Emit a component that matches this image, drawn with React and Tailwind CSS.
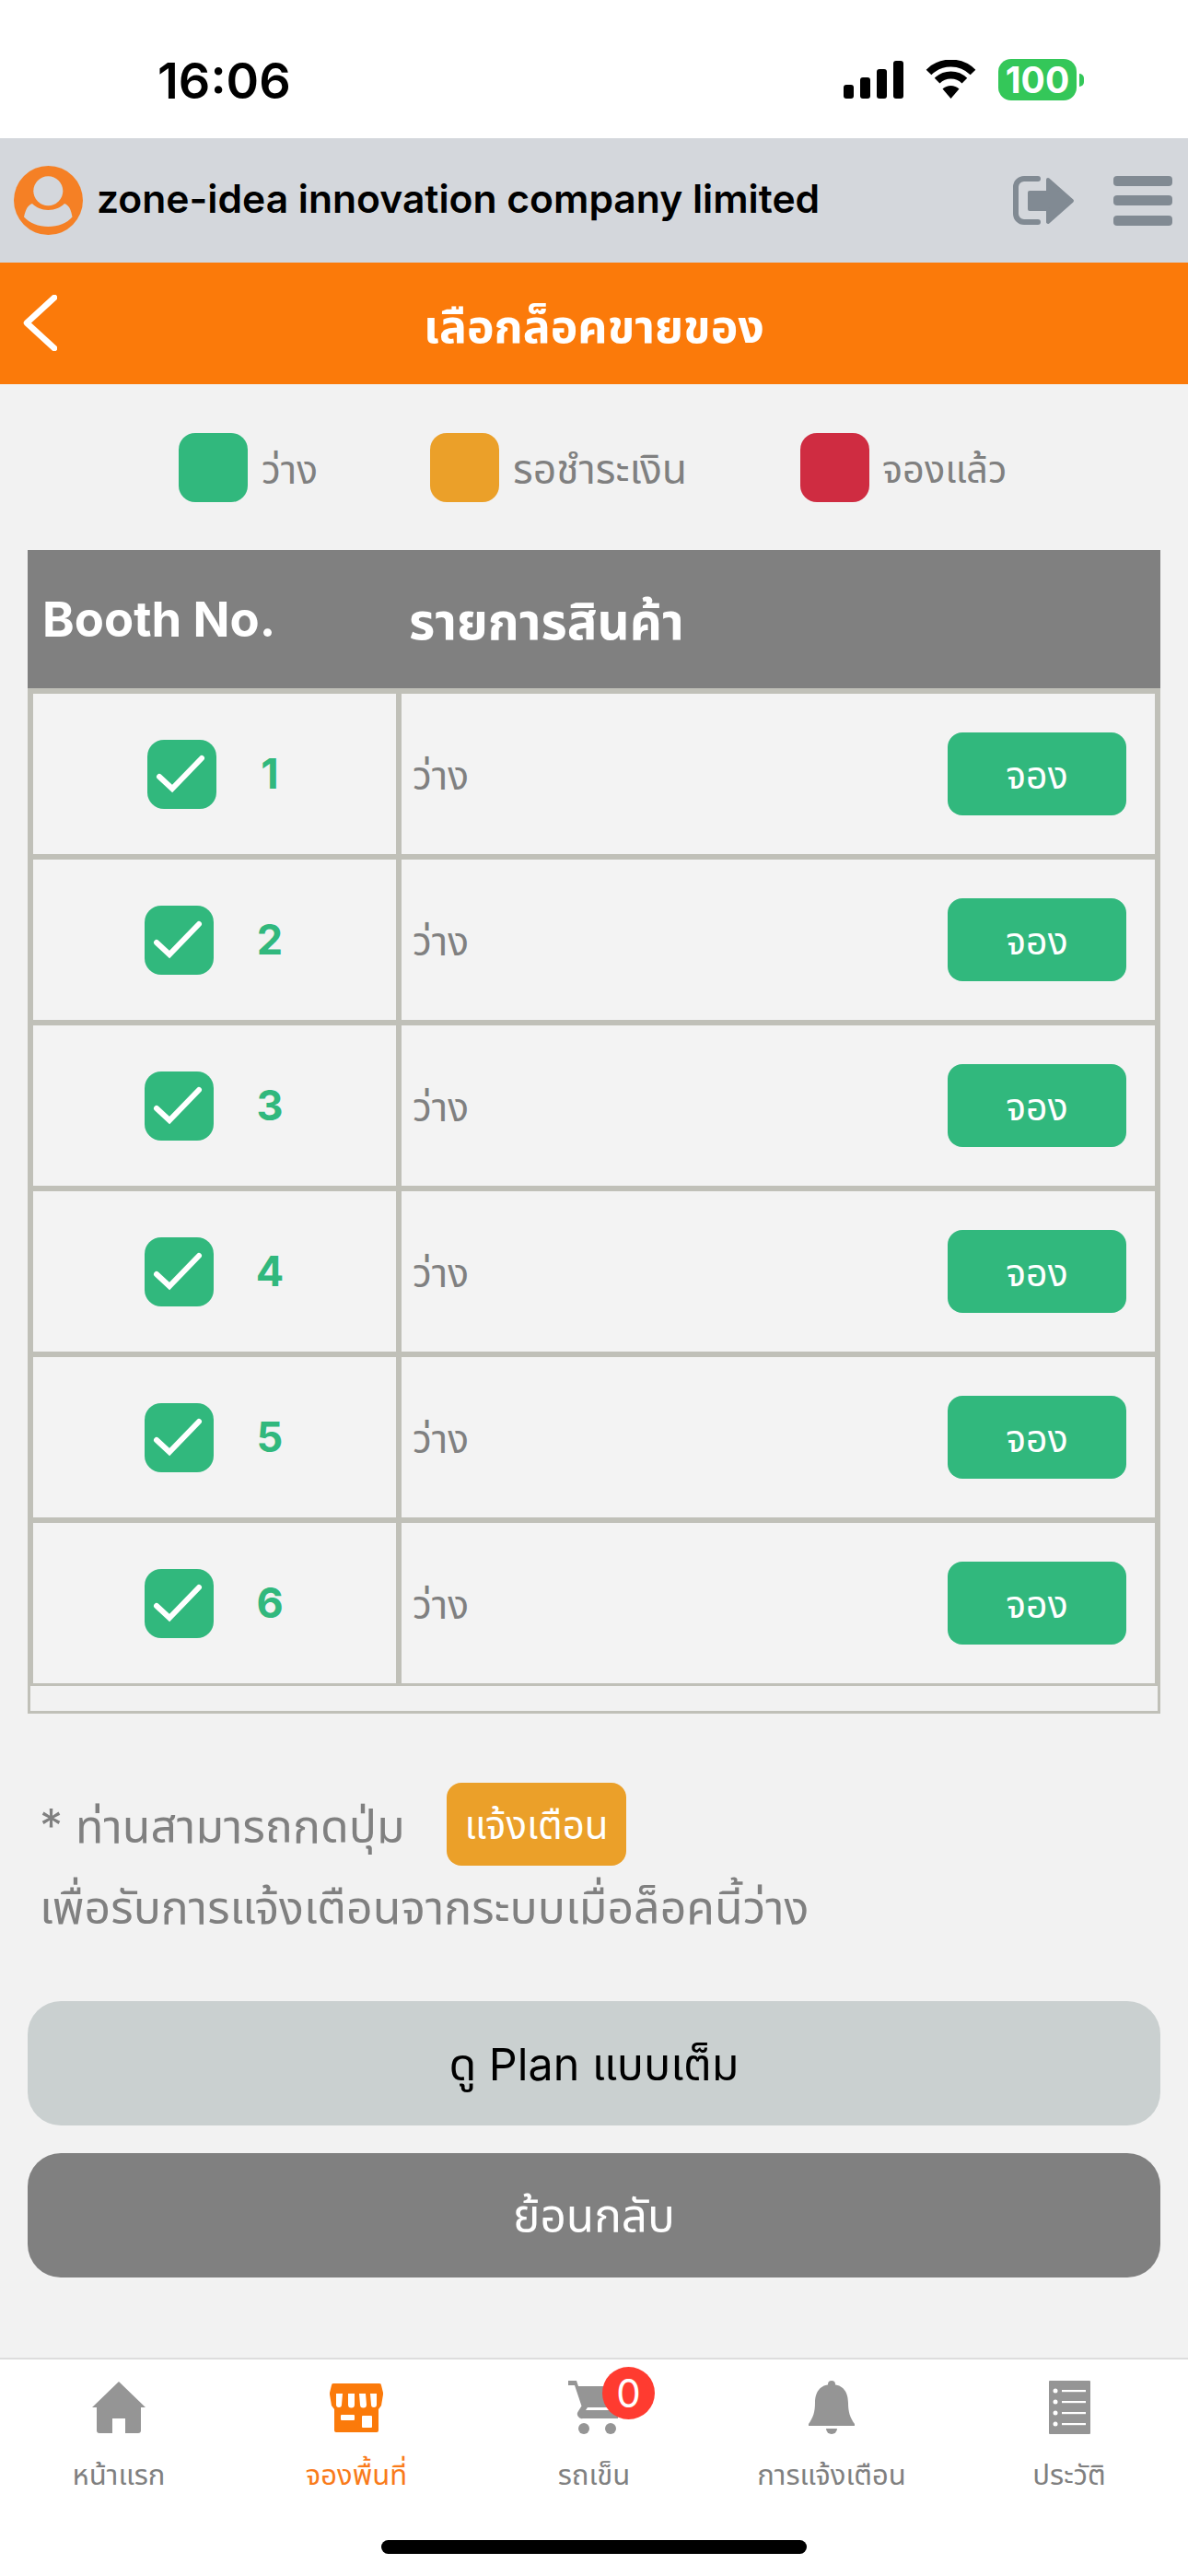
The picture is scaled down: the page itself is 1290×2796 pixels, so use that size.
const GREEN = "#31b87d";

function StatusBar() {
  return (
    <div className="h-[150px] bg-white relative flex items-start shrink-0">
      <div className="ml-[171px] mt-[58px] text-[54px] leading-[60px] font-semibold text-black tracking-[0px]">16:06</div>
      <div className="ml-auto mt-[64px] mr-[113px] flex items-start">
        <svg width="65" height="41" viewBox="0 0 65 41" className="mt-[2px]">
          <rect x="0" y="26" width="11" height="15" rx="3" fill="#000" />
          <rect x="18" y="18" width="11" height="23" rx="3" fill="#000" />
          <rect x="36" y="9" width="11" height="32" rx="3" fill="#000" />
          <rect x="54" y="0" width="11" height="41" rx="3" fill="#000" />
        </svg>
        <svg width="57" height="42" viewBox="0 0 57 42" className="ml-[23px] mt-[1px]">
          <path d="M4.5 13.5 A34 34 0 0 1 52.5 13.5" fill="none" stroke="#000" strokeWidth="8" />
          <path d="M13.6 22.6 A21 21 0 0 1 43.4 22.6" fill="none" stroke="#000" strokeWidth="8" />
          <path d="M28.5 42 L19.5 31.5 A13 13 0 0 1 37.5 31.5 Z" fill="#000" />
        </svg>
        <div className="ml-[23px] flex items-center">
          <div className="w-[85px] h-[45px] rounded-[14px] bg-[#34c759] text-white font-bold text-[39px] leading-[45px] text-center">100</div>
          <div className="ml-[3px] w-[5px] h-[14px] rounded-r-[5px] bg-[#34c759]" />
        </div>
      </div>
    </div>
  );
}

function TopBar() {
  return (
    <div className="h-[135px] bg-[#d4d7dc] flex items-center shrink-0 pl-[15px] pr-[17px]">
      <svg width="75" height="75" viewBox="0 0 75 75" className="shrink-0">
        <circle cx="37.5" cy="37.5" r="37.5" fill="#f58025" />
        <circle cx="37.3" cy="27.3" r="16" fill="#d4d7dc" />
        <path d="M11 55.5 C13 47 15 43 20 41 C24 45 30 48 37.3 48 C45 48 51 45 55 41 C60 43 62 47 63.5 55.5 C58 62 48 66 37.3 66 C27 66 17 62 11 55.5 Z" fill="#d4d7dc" />
      </svg>
      <div className="ml-[15px] -translate-y-[2px] text-[42.6px] leading-[50px] font-semibold text-black whitespace-nowrap">zone-idea innovation company limited</div>
      <svg width="67" height="54" viewBox="0 0 67 54" className="ml-auto shrink-0">
        <path d="M27 3 H12 A9 9 0 0 0 3 12 V41 A9 9 0 0 0 12 50 H27" fill="none" stroke="#818a93" strokeWidth="6" strokeLinecap="round" />
        <path d="M18 18 H38 V4 L64 27 L38 50 V36 H18 Z" fill="#818a93" stroke="#818a93" strokeWidth="4" strokeLinejoin="round" />
      </svg>
      <div className="ml-[42px] w-[64px] flex flex-col gap-[10.5px] shrink-0">
        <div className="h-[11px] rounded-[4px] bg-[#818a93]" />
        <div className="h-[11px] rounded-[4px] bg-[#818a93]" />
        <div className="h-[11px] rounded-[4px] bg-[#818a93]" />
      </div>
    </div>
  );
}

function TitleBar() {
  return (
    <div className="h-[132px] bg-[#fb7a0a] relative flex items-center justify-center shrink-0">
      <svg width="37" height="61" viewBox="0 0 37 61" className="absolute left-[25px] top-[35px]">
        <path d="M34 3 L4 30.5 L34 58" fill="none" stroke="#fff" strokeWidth="6.5" strokeLinecap="round" strokeLinejoin="round" />
      </svg>
      <div className="text-white font-bold text-[50px] leading-[60px] whitespace-nowrap translate-y-[3px]">เลือกล็อคขายของ</div>
    </div>
  );
}

function Legend() {
  return (
    <div className="flex pl-[194px] h-[75px] text-[#808080] leading-[79px]">
      <div className="w-[273px] flex gap-[15px] text-[42.5px]">
        <div className="w-[75px] h-[75px] rounded-[18px] bg-[#31b87d]" />
        <span>ว่าง</span>
      </div>
      <div className="w-[402px] flex gap-[15px] text-[44.5px]">
        <div className="w-[75px] h-[75px] rounded-[18px] bg-[#eba029]" />
        <span>รอชำระเงิน</span>
      </div>
      <div className="flex gap-[14px] text-[41.5px]">
        <div className="w-[75px] h-[75px] rounded-[18px] bg-[#cf2c41]" />
        <span>จองแล้ว</span>
      </div>
    </div>
  );
}

function Check() {
  return (
    <svg width="75" height="75" viewBox="0 0 75 75" className="shrink-0">
      <rect width="75" height="75" rx="18" fill={GREEN} />
      <path d="M13 40 L27 53 L59 20" fill="none" stroke="#fff" strokeWidth="6" strokeLinecap="round" strokeLinejoin="miter" className="blur-[0.7px]" />
    </svg>
  );
}

function Row({ n }) {
  return (
    <div className="flex h-[180px] bg-[#f3f3f3]">
      <div className={"w-[400px] border-[3px] border-[#c0c0b8] flex items-center " + (n === 1 ? "pl-[124px] gap-[28px]" : "pl-[121px] gap-[31px]")}>
        <Check />
        <div className="w-[60px] text-center text-[45px] leading-[50px] font-bold text-[#31b87d]">{n}</div>
      </div>
      <div className="flex-1 border-[3px] border-[#c0c0b8] flex items-center pl-[12px] pr-[31px] justify-between">
        <span className="text-[42.5px] leading-[50px] text-[#808080] translate-y-[2px]">ว่าง</span>
        <div className="w-[194px] h-[90px] rounded-[16px] bg-[#31b87d] text-white text-[41px] leading-[92px] text-center">จอง</div>
      </div>
    </div>
  );
}

function BoothTable() {
  return (
    <div className="mt-[52px] mx-[30px]">
      <div className="h-[150px] bg-[#808080] flex items-center text-white font-bold leading-[60px]">
        <div className="w-[414px] pl-[16px] text-[52.5px]">Booth No.</div>
        <div className="text-[54.5px] translate-y-[2px]">รายการสินค้า</div>
      </div>
      <div className="border-[3px] border-[#c0c0b8] pb-[27px]">
        {[1, 2, 3, 4, 5, 6].map((n) => (
          <Row key={n} n={n} />
        ))}
      </div>
    </div>
  );
}

function Note() {
  return (
    <div className="mt-[75px] pl-[43px] text-[#808080] text-[50px]">
      <div className="flex items-center h-[90px]">
        <div className="w-[442px] whitespace-nowrap translate-y-[2px]">* ท่านสามารถกดปุ่ม</div>
        <div className="w-[195px] h-[90px] rounded-[16px] bg-[#eba029] text-white text-[42px] leading-[92px] text-center">แจ้งเตือน</div>
      </div>
      <div className="mt-[10px] h-[70px] leading-[70px] whitespace-nowrap">เพื่อรับการแจ้งเตือนจากระบบเมื่อล็อคนี้ว่าง</div>
    </div>
  );
}

function Buttons() {
  return (
    <div className="mt-[67px] mx-[30px] flex flex-col gap-[30px]">
      <div className="h-[135px] rounded-[36px] bg-[#cad0d0] text-black text-[48.4px] leading-[137px] text-center">ดู Plan แบบเต็ม</div>
      <div className="h-[135px] rounded-[36px] bg-[#808080] text-white text-[49.5px] leading-[137px] text-center">ย้อนกลับ</div>
    </div>
  );
}

const HomeIcon = () => (
  <svg width="58" height="56" viewBox="0 0 58 56">
    <path d="M29 0 L58 28 H53 V53 A3 3 0 0 1 50 56 H36 V40 H22 V56 H8 A3 3 0 0 1 5 53 V28 H0 Z" fill="#959595" />
  </svg>
);

const StoreIcon = () => (
  <svg width="58" height="53" viewBox="0 0 58 53">
    <path d="M2 2 A2 2 0 0 1 4 0 H54 A2 2 0 0 1 56 2 L58 10 V12 L56 24 L53 28 V51 A2 2 0 0 1 51 53 H7 A2 2 0 0 1 5 51 V28 L2 24 L0 12 V10 Z" fill="#fb7a0a" />
    <path d="M7 11 H14 L13 23 A3 3 0 0 1 7 23 Z M20 11 H27 L27 23 A3.5 3.5 0 0 1 20 23 Z M32 11 H39 L40 23 A3.5 3.5 0 0 1 33 23 Z M44 11 H51 L51 23 A3 3 0 0 1 45 23 Z" fill="#fff" />
    <rect x="12" y="34" width="15" height="6" rx="1" fill="#fff" />
    <rect x="35" y="35" width="11" height="13" rx="1" fill="#fff" />
  </svg>
);

const CartIcon = () => (
  <svg width="54" height="58" viewBox="0 0 54 58">
    <path d="M0 0 H9 L11 6 H54 V29 H21 L19 32 H54 V41 H16 A5 5 0 0 1 11 33 L14.5 27.5 L7 5 H0 Z" fill="#959595" />
    <circle cx="17" cy="52" r="6" fill="#959595" />
    <circle cx="46" cy="52" r="6" fill="#959595" />
  </svg>
);

const BellIcon = () => (
  <svg width="50" height="58" viewBox="0 0 50 58">
    <circle cx="25" cy="4" r="4" fill="#959595" />
    <path d="M25 4 C12 4 7 13 7 24 C7 34 5 40 0 47 V49 H50 V47 C45 40 43 34 43 24 C43 13 38 4 25 4 Z" fill="#959595" />
    <path d="M19 52 H31 A6 6 0 0 1 19 52 Z" fill="#959595" />
  </svg>
);

const ListIcon = () => (
  <svg width="45" height="58" viewBox="0 0 45 58">
    <rect width="45" height="58" rx="1" fill="#959595" />
    {[11, 23, 35, 47].map((y) => (
      <g key={y}>
        <circle cx="7" cy={y} r="2.5" fill="#fff" />
        <rect x="14" y={y - 1} width="26" height="2.2" fill="#fff" />
      </g>
    ))}
  </svg>
);

function NavItem({ icon, label, active }) {
  return (
    <div className="w-[258px] flex flex-col items-center">
      <div className="h-[58px] flex items-center justify-center relative">{icon}</div>
      <div className={"mt-[24px] text-[31px] leading-[40px] whitespace-nowrap " + (active ? "text-[#f97b1a]" : "text-[#808080]")}>{label}</div>
    </div>
  );
}

function BottomNav() {
  return (
    <div className="h-[237px] bg-white border-t-2 border-[#dddddd] relative shrink-0">
      <div className="flex pt-[23px]">
        <NavItem icon={<HomeIcon />} label="หน้าแรก" />
        <NavItem icon={<StoreIcon />} label="จองพื้นที่" active />
        <NavItem
          icon={
            <div className="relative -translate-x-[1px]">
              <CartIcon />
              <div className="absolute left-[37px] top-[-15px] w-[57px] h-[57px] rounded-full bg-[#ff3b30] text-white text-[42px] leading-[57px] text-center">0</div>
            </div>
          }
          label="รถเข็น"
        />
        <NavItem icon={<BellIcon />} label="การแจ้งเตือน" />
        <NavItem icon={<ListIcon />} label="ประวัติ" />
      </div>
      <div className="absolute left-[414px] top-[196px] w-[462px] h-[15px] rounded-full bg-black" />
    </div>
  );
}

export default function App() {
  return (
    <div className="w-[1290px] h-[2796px] flex flex-col bg-[#f2f2f2] overflow-hidden font-['Inter','Noto_Sans_Thai','Noto_Sans','Liberation_Sans',sans-serif]">
      <StatusBar />
      <TopBar />
      <TitleBar />
      <div className="flex-1 pt-[53px]">
        <Legend />
        <BoothTable />
        <Note />
        <Buttons />
      </div>
      <BottomNav />
    </div>
  );
}
